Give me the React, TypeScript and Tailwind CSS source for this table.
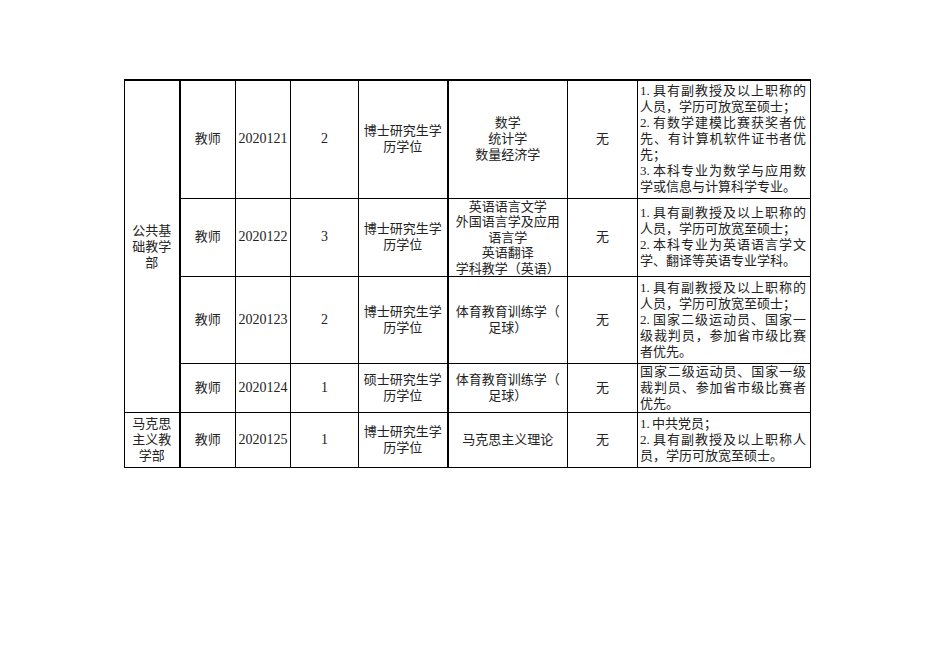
import React from "react";

type Row = {
  code: string;
  count: string;
  degree: string[];
  major: string[];
  majorLeading?: string;
  req: string[];
  h: string;
};

const rows: Row[] = [
  {
    code: "2020121",
    count: "2",
    degree: ["博士研究生学", "历学位"],
    major: ["数学", "统计学", "数量经济学"],
    req: [
      "1.具有副教授及以上职称的",
      "人员，学历可放宽至硕士；",
      "2.有数学建模比赛获奖者优",
      "先、有计算机软件证书者优",
      "先；",
      "3.本科专业为数学与应用数",
      "学或信息与计算科学专业。",
    ],
    h: "h-[118px]",
  },
  {
    code: "2020122",
    count: "3",
    degree: ["博士研究生学", "历学位"],
    major: ["英语语言文学", "外国语言学及应用", "语言学", "英语翻译", "学科教学（英语）"],
    majorLeading: "leading-[15.5px]",
    req: [
      "1.具有副教授及以上职称的",
      "人员，学历可放宽至硕士；",
      "2.本科专业为英语语言学文",
      "学、翻译等英语专业学科。",
    ],
    h: "h-[78px]",
  },
  {
    code: "2020123",
    count: "2",
    degree: ["博士研究生学", "历学位"],
    major: ["体育教育训练学（", "足球）"],
    req: [
      "1.具有副教授及以上职称的",
      "人员，学历可放宽至硕士；",
      "2.国家二级运动员、国家一",
      "级裁判员，参加省市级比赛",
      "者优先。",
    ],
    h: "h-[87px]",
  },
  {
    code: "2020124",
    count: "1",
    degree: ["硕士研究生学", "历学位"],
    major: ["体育教育训练学（", "足球）"],
    req: ["国家二级运动员、国家一级", "裁判员、参加省市级比赛者", "优先。"],
    h: "h-[48px]",
  },
  {
    code: "2020125",
    count: "1",
    degree: ["博士研究生学", "历学位"],
    major: ["马克思主义理论"],
    req: ["1.中共党员；", "2.具有副教授及以上职称人", "员，学历可放宽至硕士。"],
    h: "h-[55px]",
  },
];

function Lines({ items, className = "" }: { items: string[]; className?: string }) {
  return (
    <div className={className}>
      {items.map((t, i) => (
        <div key={i} className="whitespace-nowrap">
          {t}
        </div>
      ))}
    </div>
  );
}

// wrapped lines of a requirement are stretched to the cell edge, paragraph ends are not
function Requirements({ items }: { items: string[] }) {
  return (
    <div className="w-[166px]">
      {items.map((t, i) => {
        const next = items[i + 1];
        const wrapped = next !== undefined && !/^\d\./.test(next);
        const num = /^\d\./.test(t);
        return (
          <div
            key={i}
            className={wrapped ? "whitespace-nowrap text-justify [text-align-last:justify]" : "whitespace-nowrap"}
          >
            {num ? (
              <>
                <span className="inline-block w-[12px]">{t.slice(0, 2)}</span>
                {t.slice(2)}
              </>
            ) : (
              t
            )}
          </div>
        );
      })}
    </div>
  );
}

const cell = "border border-black p-0 align-middle text-center";

export default function App() {
  return (
    <div
      className="min-h-[662px] w-[936px] bg-white pl-[124px] pt-[79px] text-[13px] leading-[16px] text-[#222]"
      style={{ fontFamily: '"Liberation Serif", "Noto Sans CJK SC", serif' }}
    >
      <table className="table-fixed border-collapse border-t-2 border-black">
        <colgroup>
          <col className="w-[55px]" />
          <col className="w-[56px]" />
          <col className="w-[55px]" />
          <col className="w-[68px]" />
          <col className="w-[89px]" />
          <col className="w-[120px]" />
          <col className="w-[70px]" />
          <col className="w-[173px]" />
        </colgroup>
        <tbody>
          {rows.map((r, i) => (
            <tr key={r.code} className={r.h}>
              {i === 0 && (
                <td rowSpan={4} className={`${cell} border-r-2`}>
                  <Lines items={["公共基", "础教学", "部"]} />
                </td>
              )}
              {i === 4 && (
                <td className={`${cell} border-r-2`}>
                  <Lines items={["马克思", "主义教", "学部"]} />
                </td>
              )}
              <td className={cell}>教师</td>
              <td className={`${cell} text-[14px]`}>{r.code}</td>
              <td className={`${cell} text-[14px]`}>{r.count}</td>
              <td className={`${cell} border-r-2`}>
                <Lines items={r.degree} />
              </td>
              <td className={cell}>
                <Lines items={r.major} className={r.majorLeading} />
              </td>
              <td className={cell}>无</td>
              <td className={`${cell} pl-[2px] text-left`}>
                <Requirements items={r.req} />
              </td>
            </tr>
          ))}
        </tbody>
      </table>
    </div>
  );
}
